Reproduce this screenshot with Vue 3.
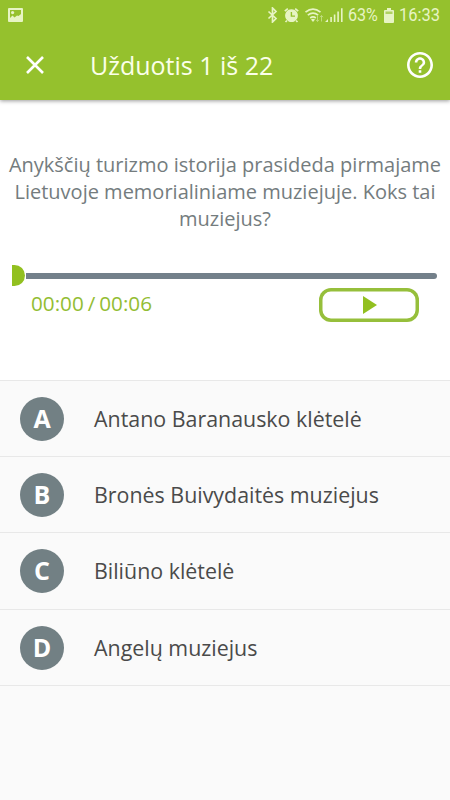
<script setup>
const options = [
  { key: 'A', label: 'Antano Baranausko klėtelė' },
  { key: 'B', label: 'Bronės Buivydaitės muziejus' },
  { key: 'C', label: 'Biliūno klėtelė' },
  { key: 'D', label: 'Angelų muziejus' },
]
</script>

<template>
  <div class="screen">
    <header class="header">
      <div class="status">
        <svg class="picture" viewBox="0 0 15 14" width="15" height="14">
          <path fill-rule="evenodd" d="M1 0h13q1 0 1 1v12q0 1-1 1H1q-1 0-1-1V1q0-1 1-1zM2 2v8l2.500-2.500L6.500 9.500 9 7.500l1.500.5L13 6V2z" />
          <circle cx="4.600" cy="4.600" r="1.600" />
        </svg>
        <svg class="icons" viewBox="0 0 78 16" width="78" height="16">
          <path class="line" d="M1.500 4.500l7.500 7L5.500 15V1L9 4.500l-7.500 7" />
          <path class="fill" fill-rule="evenodd" d="M24.500 2.200a6.400 6.400 0 1 1-.01 0zM23.700 5v4.800h4.300V8.400h-2.900V5z" />
          <path class="line" d="M17.800 4.200l3-2.600M31.200 4.200l-3-2.600M20 13.500L18.500 15M29 13.500L30.500 15" />
          <path class="line" d="M38.500 5.200q7.500-6 15 0M40.800 8.200q5.200-4.200 10.400 0M43.200 11q2.800-2.200 5.600 0" />
          <path class="fill" d="M44 12.500q2-1.500 4 0l-2 2.500z" />
          <path class="faint" d="M50.500 9v5.500M49 12.800l1.500 1.700 1.500-1.700M54.500 14.500V8.500M53 10.200l1.500-1.700 1.500 1.700" />
          <path class="fill" d="M61 12v3h-3zM63.300 10h1.600v5h-1.600zM66.800 7.500h1.600V15h-1.600zM70.300 4.500h1.600V15h-1.600zM74 1.200h1.600V15H74z" />
        </svg>
        <span class="stat percent">63%</span>
        <svg class="battery" viewBox="0 0 10 15" width="10" height="15">
          <path d="M3 0h4v2h2q1 0 1 1v11q0 1-1 1H1q-1 0-1-1V3q0-1 1-1h2z" />
          <path class="empty" d="M1.500 3.500h7v2.500h-7z" />
        </svg>
        <span class="stat clock">16:33</span>
      </div>
      <div class="toolbar">
        <svg class="close" viewBox="0 0 18 18" width="18" height="18">
          <path d="M1 1l16 16M17 1L1 17" />
        </svg>
        <h1 class="title">Užduotis 1 iš 22</h1>
        <svg class="help" viewBox="2 2 20 20" width="26" height="26">
          <path d="M11 18h2v-2h-2v2zm1-16C6.480 2 2 6.480 2 12s4.480 10 10 10 10-4.480 10-10S17.520 2 12 2zm0 18c-4.410 0-8-3.590-8-8s3.590-8 8-8 8 3.590 8 8-3.590 8-8 8zm0-14c-2.210 0-4 1.790-4 4h2c0-1.100.9-2 2-2s2 .9 2 2c0 2-3 1.750-3 5h2c0-2.250 3-2.500 3-5 0-2.210-1.790-4-4-4z" />
        </svg>
      </div>
    </header>
    <main class="task">
      <p class="question">Anykščių turizmo istorija prasideda pirmajame<br>Lietuvoje memorialiniame muziejuje. Koks tai<br>muziejus?</p>
      <div class="slider">
        <div class="thumb"></div>
        <div class="track"></div>
      </div>
      <div class="controls">
        <span class="time">00:00 / 00:06</span>
        <button class="play" aria-label="Groti">
          <svg viewBox="0 0 14 18" width="14" height="18"><path d="M0 0l14 9-14 9z" /></svg>
        </button>
      </div>
    </main>
    <ul class="options">
      <li v-for="option in options" :key="option.key" class="option">
        <span class="badge">{{ option.key }}</span>
        <span class="label">{{ option.label }}</span>
      </li>
    </ul>
  </div>
</template>

<style>
body { margin: 0; }
</style>

<style scoped>
.screen {
  width: 450px;
  height: 800px;
  overflow: hidden;
  background: #fafafa;
  font-family: "Open Sans", "Noto Sans", sans-serif;
  display: flex;
  flex-direction: column;
}
.header {
  height: 100px;
  flex: none;
  background: #95c12d;
  box-shadow: 0 1px 4px rgba(0, 0, 0, 0.4);
  z-index: 1;
}
.status {
  display: flex;
  align-items: center;
  height: 30px;
  padding-left: 8px;
  box-sizing: border-box;
  fill: #e7f4c4;
  color: #e7f4c4;
}
.icons { margin-left: 244px; flex: none; }
.line { fill: none; stroke: #e7f4c4; stroke-width: 1.7; }
.faint { fill: none; stroke: #bfdc7c; stroke-width: 1; }
.empty { fill: #afd161; }
.stat {
  flex: none;
  font: 18.7px/32px Roboto, sans-serif;
  transform-origin: left center;
  white-space: nowrap;
}
.percent { width: 35px; margin-left: 3px; transform: scaleX(0.86); }
.battery { margin-left: 1px; flex: none; }
.clock { margin-left: 5px; transform: scaleX(0.88); }
.toolbar {
  display: flex;
  align-items: center;
  height: 70px;
  padding: 0 17px 0 26px;
}
.close { fill: none; stroke: #fff; stroke-width: 2.6; }
.title {
  flex: 1;
  margin: 0 0 0 46px;
  color: #fbffe9;
  font-size: 25px;
  line-height: 34px;
  font-weight: 400;
}
.help { fill: #fff; }
.task {
  height: 280px;
  flex: none;
  box-sizing: border-box;
  padding-top: 51px;
  background: #fff;
}
.question {
  margin: 0;
  text-align: center;
  color: #747c7e;
  font-size: 20px;
  line-height: 27px;
  white-space: nowrap;
}
.slider {
  display: flex;
  align-items: center;
  gap: 1px;
  margin: 33px 13px 0 12px;
  height: 21px;
}
.thumb {
  width: 13px;
  height: 21px;
  background: #92c020;
  border-radius: 0 11px 11px 0;
}
.track {
  flex: 1;
  height: 6px;
  background: #73808a;
  border-radius: 0 3px 3px 0;
}
.controls {
  display: flex;
  justify-content: space-between;
  padding: 2px 31px 0;
}
.time {
  color: #93bd33;
  font-size: 20.7px;
  line-height: 31px;
  word-spacing: -1.4px;
}
.play {
  display: flex;
  align-items: center;
  justify-content: center;
  width: 100px;
  height: 34px;
  padding: 0 0 0 2px;
  border: 0;
  box-shadow: inset 0 0 0 3.5px #96bf3b;
  border-radius: 12px;
  background: #fff;
  fill: #92c020;
}
.options {
  list-style: none;
  margin: 0;
  padding: 0;
  border-top: 1px solid #e8e8e8;
}
.option {
  display: flex;
  align-items: center;
  height: 76.2px;
  box-sizing: border-box;
  padding: 1px 0 0 20px;
  border-bottom: 1px solid #e8e8e8;
}
.badge {
  width: 44px;
  height: 44px;
  border-radius: 50%;
  background: #728084;
  color: #fff;
  font-size: 25px;
  font-weight: 700;
  line-height: 43px;
  text-align: center;
}
.label {
  margin-left: 30px;
  color: #4a4a4a;
  font-size: 21.4px;
  line-height: 30px;
}
</style>
